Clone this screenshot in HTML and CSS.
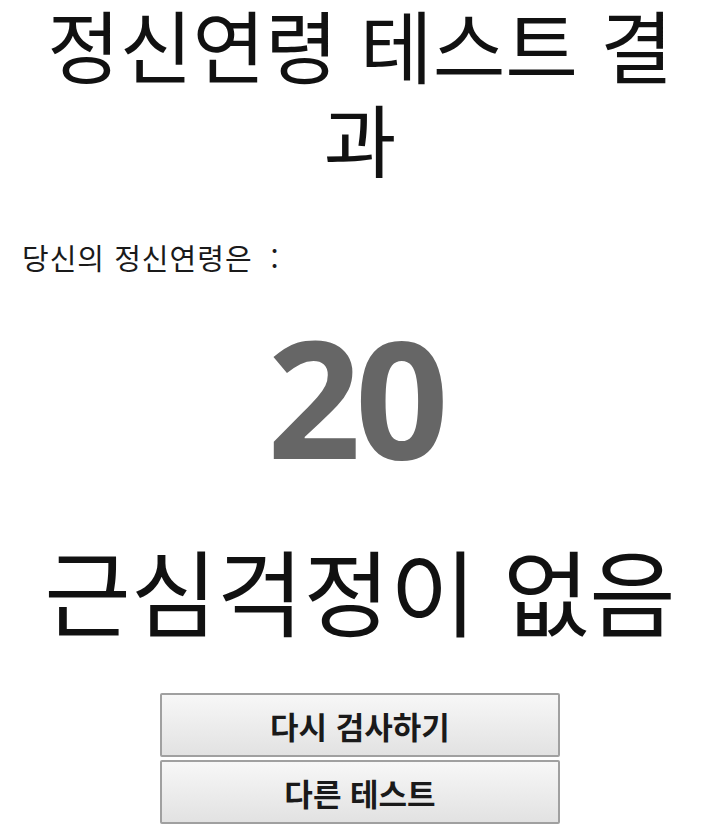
FILE: index.html
```html
<!DOCTYPE html>
<html lang="ko">
<head>
<meta charset="utf-8">
<title>정신연령 테스트 결과</title>
<link rel="stylesheet" href="styles.css">
</head>
<body>
<main class="page">
  <h1 class="title">정신연령 테스트 결과</h1>
  <p class="label">당신의 정신연령은<span class="colon">:</span></p>
  <div class="age">20</div>
  <div class="verdict">근심걱정이 없음</div>
  <div class="actions">
    <button class="btn" type="button">다시 검사하기</button>
    <button class="btn" type="button">다른 테스트</button>
  </div>
</main>
</body>
</html>
```
FILE: styles.css
```css
html, body {
  margin: 0;
  padding: 0;
  background: #ffffff;
}
body {
  font-family: "Noto Sans CJK KR", "Noto Sans", sans-serif;
  color: #111111;
}
.page {
  padding: 0 8px;
  display: flex;
  flex-direction: column;
}
.title {
  margin: -3px 0 0;
  font-size: 79px;
  font-weight: 400;
  line-height: 94px;
  text-align: center;
  color: #111111;
  padding: 0 20px;
}
.label {
  margin: 52px 0 0 14px;
  font-size: 29px;
  line-height: 40px;
  letter-spacing: 1px;
  color: #1a1a1a;
}
.colon {
  margin-left: 18px;
}
.age {
  margin-top: 29px;
  padding-right: 10px;
  font-family: "Open Sans", sans-serif;
  font-weight: 700;
  font-size: 164px;
  line-height: 180px;
  letter-spacing: -6px;
  text-align: center;
  color: #666666;
}
.verdict {
  margin-top: 48px;
  font-size: 94px;
  line-height: 110px;
  text-align: center;
  color: #111111;
}
.actions {
  margin-top: 49px;
  display: flex;
  flex-direction: column;
  align-items: center;
  gap: 3px;
}
.btn {
  width: 400px;
  height: 64px;
  border: 2px solid #a0a0a0;
  border-radius: 2px;
  background: linear-gradient(#f7f7f7, #e2e2e2);
  font-family: "Noto Sans CJK KR", sans-serif;
  font-size: 31px;
  font-weight: 700;
  color: #1a1a1a;
  padding: 0;
}
```
